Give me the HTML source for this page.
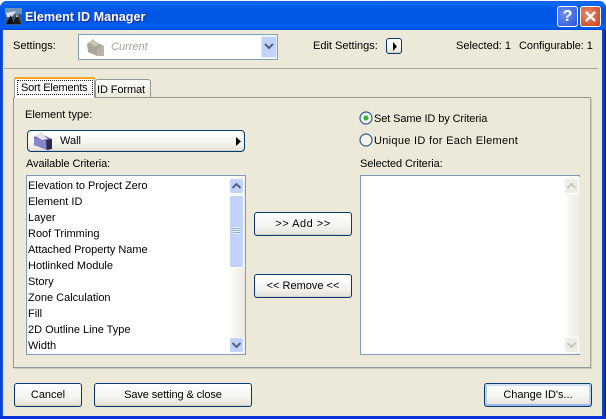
<!DOCTYPE html>
<html><head><meta charset="utf-8">
<style>
html,body{margin:0;padding:0;width:606px;height:419px;overflow:hidden;background:#fff}
*{box-sizing:border-box}
body{font:11px "Liberation Sans",sans-serif;color:#000;position:relative}
.a{position:absolute}
.t{position:absolute;white-space:nowrap;line-height:14px;height:14px}
.btn{position:absolute;border:1px solid #003c74;border-radius:3px;background:linear-gradient(#fff,#f4f4ef 60%,#e3e1d6);text-align:center;line-height:21px;box-shadow:inset 0 -1px 0 #d6d0c5}
.b24{line-height:23px}
.list{position:absolute;background:#fff;border:1px solid #7f9db9}
.sb{position:absolute;left:201px;top:1px;width:17px;height:177px;background:linear-gradient(90deg,#fff,#f3f1ec 60%,#ecebe3)}
.sbtn{position:absolute;left:1px;width:15px;height:16px;border:1px solid #fff;border-radius:2px;background:#c1d2fb}
.dis{background:#eeede5}
</style></head><body>
<!-- window frame -->
<div class="a" style="left:0;top:1px;width:606px;height:418px;border-radius:7px 7px 0 0;background:#0831d9"></div>
<div class="a" style="left:0;top:1px;width:606px;height:29px;border-radius:7px 7px 0 0;background:linear-gradient(#0a5fe0 0,#0d6cf0 3px,#0058e6 7px,#0055e5 20px,#0361f0 26px,#0048d8 29px)"></div>
<div class="a" style="left:0;top:30px;width:4px;height:386px;background:linear-gradient(90deg,#0838c8,#166aee)"></div>
<div class="a" style="left:601px;top:30px;width:5px;height:386px;background:linear-gradient(90deg,#0855dd,#0420a8)"></div>
<div class="a" style="left:3px;top:30px;width:599px;height:386px;background:#ece9d8"></div>
<!-- title -->
<svg class="a" style="left:5px;top:8px" width="17" height="17" viewBox="0 0 17 17">
<rect width="17" height="17" fill="#3d5a78"/><rect width="17" height="6" fill="#6f93b5"/>
<path d="M1 5L11 3L7 9L2 9Z" fill="#dde"/><path d="M1 16L6 7L9 16Z" fill="#111"/><path d="M8 16L12 5L16 16Z" fill="#1a1a1a"/><path d="M11 9L12 5L13 9Z" fill="#ddd"/>
</svg>
<div class="t" style="left:25px;top:10px;font-weight:bold;font-size:12.6px;color:#fff;text-shadow:1px 1px 0 #0f2f9a">Element ID Manager</div>
<!-- title buttons -->
<div class="a" style="left:557px;top:6px;width:21px;height:21px;border:1px solid #fff;border-radius:3px;background:radial-gradient(circle at 35% 35%,#6d8ff0,#2b54d8);color:#fff;font:bold 16px/19px 'Liberation Sans',sans-serif;text-align:center">?</div>
<div class="a" style="left:580px;top:6px;width:21px;height:21px;border:1px solid #fff;border-radius:3px;background:radial-gradient(circle at 35% 35%,#e88a68,#c9401c)">
<svg width="19" height="19" viewBox="0 0 19 19"><path d="M5 5L14 14M14 5L5 14" stroke="#fff" stroke-width="2.4"/></svg></div>
<!-- settings row -->
<div class="t" style="left:13px;top:38px;margin-top:1px">Settings:</div>
<div class="a" style="left:78px;top:34px;width:200px;height:26px;background:#fff;border:1px solid #7f9db9"></div>
<svg class="a" style="left:86px;top:37px" width="20" height="20" viewBox="0 0 20 20">
<path d="M1 7L7 2L10 5L18 9L18 19L11 19L2 15Z" fill="#a9a696"/><path d="M1 7L7 2L10 5L13 7L9 10L4 6Z" fill="#c6c3b3"/><path d="M11 11L18 9L18 19L11 19Z" fill="#b9b6a6"/>
</svg>
<div class="t" style="left:111px;top:40px;color:#a5a294;font-style:italic">Current</div>
<div class="a" style="left:261px;top:36px;width:16px;height:22px;background:#c1d2fb;border:1px solid #e3ebfd;border-radius:2px">
<svg class="a" style="left:2px;top:6px" width="10" height="8" viewBox="0 0 10 8"><path d="M1 1L5 5L9 1" fill="none" stroke="#4d6185" stroke-width="2"/></svg></div>
<div class="t" style="left:313px;top:39px">Edit Settings:</div>
<div class="btn" style="left:386px;top:38px;width:16px;height:16px;border-radius:3px"><svg class="a" style="left:5px;top:3px" width="6" height="9" viewBox="0 0 6 9"><path d="M1 0L5 4.5L1 9Z" fill="#000"/></svg></div>
<div class="t" style="left:456px;top:39px">Selected: 1</div>
<div class="t" style="left:519px;top:39px;letter-spacing:-.05px">Configurable: 1</div>
<div class="a" style="left:4px;top:68px;width:594px;height:1px;background:#aca899"></div>
<!-- panel -->
<div class="a" style="left:13px;top:97px;width:578px;height:271px;background:#ece9d8;border:1px solid #919b9c;border-right-color:#aca899;border-bottom-color:#919b9c;box-shadow:1px 1px 0 #d0cdbc"></div>
<!-- tabs -->
<div class="a" style="left:95px;top:79px;width:56px;height:19px;background:linear-gradient(#fff,#ece9d8);border:1px solid #919b9c;border-bottom:1px solid #919b9c;border-radius:3px 3px 0 0"></div>
<div class="t" style="left:97px;top:83px;letter-spacing:-.1px">ID Format</div>
<div class="a" style="left:14px;top:77px;width:81px;height:21px;background:#fff;border:1px solid #919b9c;border-bottom:none;border-radius:3px 3px 0 0"></div>
<div class="a" style="left:14px;top:77px;width:81px;height:2px;background:#f6a81e;border-radius:3px 3px 0 0"></div>
<div class="a" style="left:17px;top:80px;width:76px;height:15px;border:1px dotted #222"></div>
<div class="t" style="left:21px;top:81px;letter-spacing:-.2px">Sort Elements</div>
<div class="a" style="left:17px;top:98px;width:77px;height:1px;background:#ece9d8"></div>
<!-- left column -->
<div class="t" style="left:25px;top:108px">Element type:</div>
<div class="btn" style="left:27px;top:130px;width:218px;height:22px;border-radius:4px;text-align:left">
<span class="a" style="left:32px;top:0">Wall</span>
<svg class="a" style="left:208px;top:6px" width="6" height="9" viewBox="0 0 6 9"><path d="M0 0L5 4.5L0 9Z" fill="#000"/></svg></div>
<svg class="a" style="left:33px;top:131px" width="20" height="20" viewBox="0 0 20 20">
<path d="M1 6L9 1L10 4L19 8L19 18L14 19L1 14Z" fill="#6c6cb8"/><path d="M2 5L9 1L10 4L15 8L9 9Z" fill="#e4e4ee"/><path d="M13 9L19 8L19 18L14 19Z" fill="#2c2c48"/><path d="M1 7L13 10L13 18L1 14Z" fill="#8686cc"/>
</svg>
<div class="t" style="left:26px;top:157px;letter-spacing:-.1px">Available Criteria:</div>
<div class="list" style="left:26px;top:175px;width:220px;height:180px">
<div class="sb">
<div class="sbtn" style="top:1px"><svg class="a" style="left:2px;top:4px" width="9" height="6" viewBox="0 0 9 6"><path d="M.5 5L4.5 1L8.500 5" fill="none" stroke="#4d6185" stroke-width="2"/></svg></div>
<div class="sbtn" style="top:18px;height:73px;background:#c1d2fb"><div class="a" style="left:3px;top:31px;width:7px;height:7px;background:repeating-linear-gradient(#eef3fe 0,#eef3fe 1px,#8fa8e0 1px,#8fa8e0 2px)"></div></div>
<div class="sbtn" style="top:160px"><svg class="a" style="left:2px;top:4px" width="9" height="6" viewBox="0 0 9 6"><path d="M.5 1L4.5 5L8.500 1" fill="none" stroke="#4d6185" stroke-width="2"/></svg></div>
</div>
</div>
<div class="t" style="left:28px;top:179px;letter-spacing:-.04px">Elevation to Project Zero</div>
<div class="t" style="left:28px;top:195px">Element ID</div>
<div class="t" style="left:28px;top:211px">Layer</div>
<div class="t" style="left:28px;top:227px">Roof Trimming</div>
<div class="t" style="left:28px;top:243px;letter-spacing:-.04px">Attached Property Name</div>
<div class="t" style="left:28px;top:259px">Hotlinked Module</div>
<div class="t" style="left:28px;top:275px">Story</div>
<div class="t" style="left:28px;top:291px">Zone Calculation</div>
<div class="t" style="left:28px;top:307px">Fill</div>
<div class="t" style="left:28px;top:323px">2D Outline Line Type</div>
<div class="t" style="left:28px;top:339px">Width</div>
<!-- middle -->
<div class="btn b24" style="left:254px;top:212px;width:98px;height:24px;letter-spacing:.5px">&gt;&gt; Add &gt;&gt;</div>
<div class="btn b24" style="left:254px;top:274px;width:98px;height:24px">&lt;&lt; Remove &lt;&lt;</div>
<!-- right column -->
<svg class="a" style="left:358.500px;top:111px" width="15" height="15" viewBox="0 0 15 15"><circle cx="7" cy="7" r="6" fill="#f4f4ee" stroke="#2f5f90" stroke-width="1.2"/><circle cx="7" cy="7" r="2.500" fill="#2fb52f"/></svg>
<div class="t" style="left:374px;top:112px;letter-spacing:-.1px">Set Same ID by Criteria</div>
<svg class="a" style="left:358.500px;top:133px" width="15" height="15" viewBox="0 0 15 15"><circle cx="7" cy="7" r="6" fill="#f4f4ee" stroke="#2f5f90" stroke-width="1.2"/></svg>
<div class="t" style="left:374px;top:134px;letter-spacing:.3px">Unique ID for Each Element</div>
<div class="t" style="left:360px;top:157px;letter-spacing:-.1px">Selected Criteria:</div>
<div class="list" style="left:360px;top:175px;width:220px;height:180px">
<div class="sb" style="left:202px">
<div class="sbtn dis" style="top:1px"><svg class="a" style="left:2px;top:4px" width="9" height="6" viewBox="0 0 9 6"><path d="M.5 5L4.500 1L8.500 5" fill="none" stroke="#c9c7ba" stroke-width="2"/></svg></div>
<div class="sbtn dis" style="top:160px"><svg class="a" style="left:2px;top:4px" width="9" height="6" viewBox="0 0 9 6"><path d="M.5 1L4.500 5L8.500 1" fill="none" stroke="#c9c7ba" stroke-width="2"/></svg></div>
</div>
</div>
<!-- bottom -->
<div class="btn b24" style="left:14px;top:383px;width:68px;height:24px">Cancel</div>
<div class="btn b24" style="left:94px;top:383px;width:158px;height:24px;letter-spacing:-.1px">Save setting &amp; close</div>
<div class="btn b24" style="left:484px;top:383px;width:108px;height:24px;box-shadow:inset 0 2px 0 #cfdef9,inset 0 -2px 0 #9db8ea,inset 2px 0 0 #bcd0f5,inset -2px 0 0 #bcd0f5">Change ID's...</div>
</body></html>
